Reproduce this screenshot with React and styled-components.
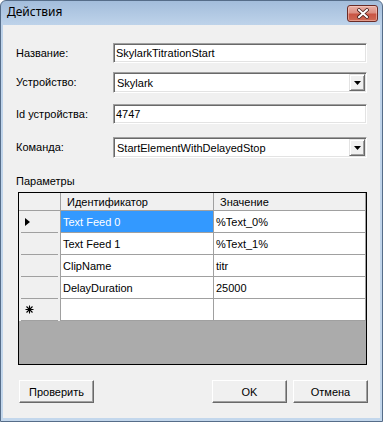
import React from 'react';
import styled, { createGlobalStyle, css } from 'styled-components';

const Global = createGlobalStyle`
  html, body { margin: 0; padding: 0; background: #ffffff; }
  body {
    font-family: "Liberation Sans", Arial, sans-serif;
    font-size: 11px;
    color: #000;
  }
  #root { width: 383px; height: 422px; }
`;

const Window = styled.div`
  width: 383px;
  height: 422px;
  box-sizing: border-box;
  border: 1px solid #566d89;
  border-radius: 6px 6px 0 0;
  background: linear-gradient(#a3bddb 0px, #bed3ea 24px, #c3d7ec 100%);
  display: flex;
  flex-direction: column;
  padding: 0 2px 3px 2px;
  overflow: hidden;
`;

const TitleBar = styled.div`
  height: 24px;
  flex: none;
  display: flex;
  align-items: flex-start;
  justify-content: space-between;
`;

const TitleText = styled.span`
  font-family: "Noto Sans", "Open Sans", sans-serif;
  font-size: 12px;
  line-height: 16px;
  padding: 3px 0 0 4px;
  color: #000;
`;

const CloseButton = styled.div`
  width: 31px;
  height: 17px;
  box-sizing: border-box;
  margin: 4px 2px 0 0;
  border: 1px solid #6a2b26;
  border-radius: 3px;
  background: linear-gradient(#e9b0a6 0%, #dc8f82 45%, #c95544 55%, #cf6a55 100%);
  box-shadow: inset 0 0 0 1px rgba(255, 220, 210, 0.45);
  display: flex;
  align-items: center;
  justify-content: center;
`;

const Client = styled.div`
  flex: 1;
  background: #f0f0f0;
  display: flex;
  flex-direction: column;
  padding-left: 13px;
`;

const FieldRow = styled.div`
  display: grid;
  grid-template-columns: 97px 254px;
  align-items: center;
  margin-top: ${p => p.$mt}px;
`;

const Label = styled.span`
  line-height: 13px;
  white-space: nowrap;
`;

const sunken = css`
  box-sizing: border-box;
  background: #ffffff;
  border: 1px solid;
  border-color: #a0a0a0 #ffffff #ffffff #a0a0a0;
  box-shadow: inset 1px 1px 0 #696969, inset -1px -1px 0 #e3e3e3;
`;

const TextBox = styled.div`
  ${sunken};
  height: 20px;
  display: flex;
  align-items: center;
  padding: 0 2px;
  white-space: nowrap;
  overflow: hidden;
`;

const Combo = styled.div`
  ${sunken};
  height: 21px;
  display: flex;
  align-items: center;
  justify-content: space-between;
  padding: 1px 1px 1px 3px;
  white-space: nowrap;
`;

const DropButton = styled.span`
  width: 16px;
  height: 17px;
  box-sizing: border-box;
  background: #f0f0f0;
  border: 1px solid;
  border-color: #e3e3e3 #696969 #696969 #e3e3e3;
  box-shadow: inset 1px 1px 0 #ffffff, inset -1px -1px 0 #a0a0a0;
  display: flex;
  align-items: center;
  justify-content: center;
`;

const SectionLabel = styled.span`
  line-height: 13px;
  margin-top: 17px;
`;

const DataGrid = styled.div`
  margin-top: 4px;
  margin-left: 2px;
  width: 349px;
  height: 173px;
  box-sizing: border-box;
  border: 1px solid #000;
  background: #ababab;
  display: flex;
  flex-direction: column;
`;

const GridRow = styled.div`
  display: grid;
  grid-template-columns: 42px 153px 152px;
  height: ${p => p.$h}px;
  flex: none;
`;

const CornerCell = styled.div`
  background: #f0f0f0;
  border-right: 1px solid #a0a0a0;
  border-bottom: 1px solid #a0a0a0;
`;

const HeadCell = styled.div`
  background: #f0f0f0;
  border-right: 1px solid #a0a0a0;
  border-bottom: 1px solid #a0a0a0;
  display: flex;
  align-items: center;
  padding: 1px 0 0 6px;
  white-space: nowrap;
`;

const RowHead = styled.div`
  border-right: 1px solid #a0a0a0;
  background:
    linear-gradient(#a0a0a0, #a0a0a0) no-repeat 2px 100% / calc(100% - 4px) 1px,
    #f0f0f0;
  display: flex;
  align-items: center;
  padding-left: ${p => p.$pl}px;
  padding-bottom: 1px;
`;

const Cell = styled.div`
  background: ${p => (p.$selected ? '#3399ff' : '#ffffff')};
  color: ${p => (p.$selected ? '#ffffff' : '#000000')};
  border-right: 1px solid #a0a0a0;
  border-bottom: 1px solid #a0a0a0;
  display: flex;
  align-items: center;
  padding-left: 2px;
  white-space: nowrap;
  overflow: hidden;
`;

const ButtonBar = styled.div`
  display: flex;
  margin-top: 15px;
  margin-left: 3px;
`;

const Button = styled.button`
  width: 75px;
  height: 23px;
  box-sizing: border-box;
  margin: 0 0 0 ${p => p.$ml || 0}px;
  padding: 0;
  font-family: "Liberation Sans", Arial, sans-serif;
  font-size: 11px;
  color: #000;
  background: #f0f0f0;
  border: 1px solid;
  border-color: #ffffff #696969 #696969 #ffffff;
  box-shadow: inset -1px -1px 0 #a0a0a0;
  border-radius: 0;
`;

const Arrow = () => (
  <svg width="7" height="4" viewBox="0 0 7 4">
    <polygon points="0,0 7,0 3.5,4" fill="#000" />
  </svg>
);

const CurrentMark = () => (
  <svg width="5" height="8" viewBox="0 0 5 8">
    <polygon points="0,0 5,4 0,8" fill="#000" />
  </svg>
);

const NewRowMark = () => (
  <svg width="9" height="9" viewBox="0 0 9 9">
    <path d="M4.5 0.5V8.5M0.5 4.5H8.5M1.5 1.5L7.5 7.5M7.5 1.5L1.5 7.5" stroke="#000" strokeWidth="1.1" fill="none" />
  </svg>
);

const CloseGlyph = () => (
  <svg width="12" height="11" viewBox="0 0 12 11">
    <path d="M2 2L10 9M10 2L2 9" stroke="#4a1d19" strokeWidth="3.6" strokeLinecap="square" fill="none" />
    <path d="M2 2L10 9M10 2L2 9" stroke="#ffffff" strokeWidth="2" strokeLinecap="square" fill="none" />
  </svg>
);

const rows = [
  { id: 'Text Feed 0', value: '%Text_0%', current: true },
  { id: 'Text Feed 1', value: '%Text_1%' },
  { id: 'ClipName', value: 'titr' },
  { id: 'DelayDuration', value: '25000' },
];

export default function App() {
  return (
    <>
      <Global />
      <Window>
        <TitleBar>
          <TitleText>Действия</TitleText>
          <CloseButton>
            <CloseGlyph />
          </CloseButton>
        </TitleBar>
        <Client>
          <FieldRow $mt={18}>
            <Label>Название:</Label>
            <TextBox>SkylarkTitrationStart</TextBox>
          </FieldRow>
          <FieldRow $mt={9}>
            <Label>Устройство:</Label>
            <Combo>
              <span>Skylark</span>
              <DropButton><Arrow /></DropButton>
            </Combo>
          </FieldRow>
          <FieldRow $mt={11}>
            <Label>Id устройства:</Label>
            <TextBox>4747</TextBox>
          </FieldRow>
          <FieldRow $mt={13}>
            <Label>Команда:</Label>
            <Combo>
              <span>StartElementWithDelayedStop</span>
              <DropButton><Arrow /></DropButton>
            </Combo>
          </FieldRow>
          <SectionLabel>Параметры</SectionLabel>
          <DataGrid>
            <GridRow $h={18}>
              <CornerCell />
              <HeadCell>Идентификатор</HeadCell>
              <HeadCell>Значение</HeadCell>
            </GridRow>
            {rows.map(r => (
              <GridRow $h={22} key={r.id}>
                <RowHead $pl={6}>{r.current ? <CurrentMark /> : null}</RowHead>
                <Cell $selected={r.current}>{r.id}</Cell>
                <Cell>{r.value}</Cell>
              </GridRow>
            ))}
            <GridRow $h={22}>
              <RowHead $pl={6}><NewRowMark /></RowHead>
              <Cell />
              <Cell />
            </GridRow>
          </DataGrid>
          <ButtonBar>
            <Button>Проверить</Button>
            <Button $ml={118}>OK</Button>
            <Button $ml={6}>Отмена</Button>
          </ButtonBar>
        </Client>
      </Window>
    </>
  );
}
